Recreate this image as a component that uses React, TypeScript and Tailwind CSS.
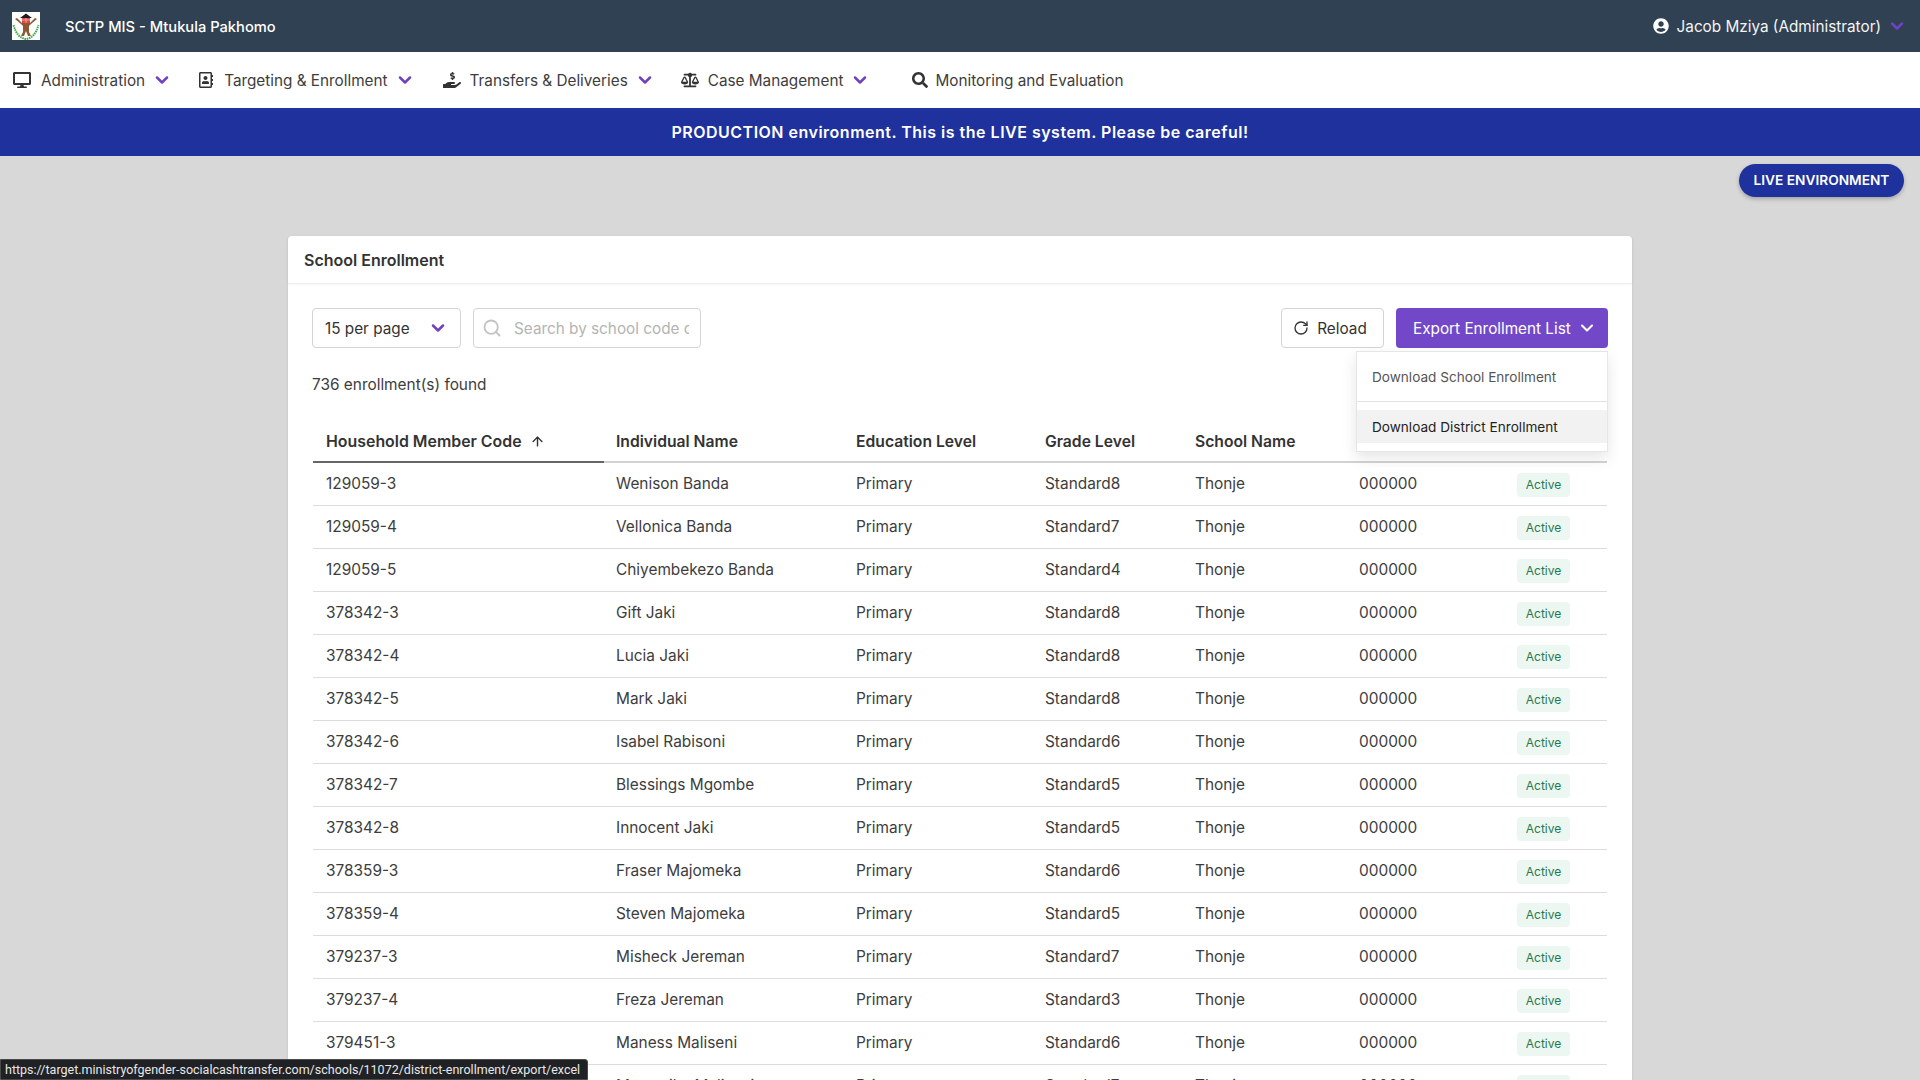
import { ChevronDown, ArrowUp, RotateCw, Search } from 'lucide-react';
import { FaDesktop, FaSearch, FaBalanceScale, FaHandHoldingUsd, FaRegAddressBook, FaUserCircle } from 'react-icons/fa';

const rows = [
  ['129059-3', 'Wenison Banda', 'Standard8'],
  ['129059-4', 'Vellonica Banda', 'Standard7'],
  ['129059-5', 'Chiyembekezo Banda', 'Standard4'],
  ['378342-3', 'Gift Jaki', 'Standard8'],
  ['378342-4', 'Lucia Jaki', 'Standard8'],
  ['378342-5', 'Mark Jaki', 'Standard8'],
  ['378342-6', 'Isabel Rabisoni', 'Standard6'],
  ['378342-7', 'Blessings Mgombe', 'Standard5'],
  ['378342-8', 'Innocent Jaki', 'Standard5'],
  ['378359-3', 'Fraser Majomeka', 'Standard6'],
  ['378359-4', 'Steven Majomeka', 'Standard5'],
  ['379237-3', 'Misheck Jereman', 'Standard7'],
  ['379237-4', 'Freza Jereman', 'Standard3'],
  ['379451-3', 'Maness Maliseni', 'Standard6'],
  ['379451-4', 'Mayamiko Maliseni', 'Standard7'],
];

const colWidths = 'grid grid-cols-[291px_240px_189px_150px_164px_158px_102px]';

const NavItem = ({ icon, label, chevron = true, className = '', textClass = 'ml-[9px]' }: { icon: React.ReactNode; label: string; chevron?: boolean; className?: string; textClass?: string }) => (
  <div className={`flex items-center text-[15.3px] text-[#3d3d3d] ${className}`}>
    <span className="flex w-[18px] justify-center text-[#333]">{icon}</span>
    <span className={`pt-[2px] ${textClass}`}>{label}</span>
    {chevron && <ChevronDown className="ml-[7px] h-[20px] w-[20px] text-[#6f42c1]" strokeWidth={3} />}
  </div>
);

// Logo: white tile, roof and red house held up by two figures, green name round the bottom
function Logo() {
  return (
    <svg viewBox="0 0 28 28" className="h-[28px] w-[28px] bg-white">
      <path d="M8 6 L14 1.5 L20 6 Z" fill="#1c1c1c" />
      <rect x="10" y="6" width="8" height="7" fill="#e2474b" />
      <path d="M10 8h8M14 6v7" stroke="#f5b5b5" strokeWidth="0.8" />
      <path d="M3 7 L9 12 L11 14 L11 20 L9 24 L12 24 L14 19 L16 24 L19 24 L17 20 L17 14 L19 12 L25 7 L23 6 L18 11 L10 11 L5 6 Z" fill="#8c5a32" />
      <path d="M1.5 13 Q5 26 14 27 Q23 26 26.5 13" fill="none" stroke="#3fae49" strokeWidth="2" strokeDasharray="1.6 0.7" />
    </svg>
  );
}

export default function App() {
  return (
    <div className="relative h-[1080px] overflow-hidden bg-[#d8d8d8] font-['Inter',sans-serif] text-[#333]">
      <header className="flex h-[52px] items-center bg-[#2f4152] pl-[12px] pr-[13px] text-white">
        <Logo />
        <span className="ml-[25px] pt-[2px] text-[14.7px] font-medium">SCTP MIS - Mtukula Pakhomo</span>
        <div className="ml-auto flex items-center">
          <FaUserCircle className="h-[16px] w-[16px]" />
          <span className="ml-[8px] pt-[2px] text-[15.3px] text-[#f4f4f4]">Jacob Mziya (Administrator)</span>
          <ChevronDown className="ml-[6px] h-[20px] w-[20px] text-[#6f42c1]" strokeWidth={3} />
        </div>
      </header>

      <nav className="flex h-[56px] items-center bg-white pl-[13px]">
        <NavItem textClass="ml-[10px]" icon={<FaDesktop className="h-[16px] w-[18px]" />} label="Administration" />
        <NavItem className="ml-[25px]" icon={<FaRegAddressBook className="h-[16px] w-[16px]" />} label="Targeting & Enrollment" />
        <NavItem className="ml-[28px]" icon={<FaHandHoldingUsd className="h-[18px] w-[18px]" />} label="Transfers & Deliveries" />
        <NavItem className="ml-[26px]" icon={<FaBalanceScale className="h-[16px] w-[20px]" />} label="Case Management" />
        <NavItem className="ml-[41px]" textClass="ml-[6px]" icon={<FaSearch className="h-[16px] w-[16px]" />} label="Monitoring and Evaluation" chevron={false} />
      </nav>

      <div className="flex h-[48px] items-center justify-center bg-[#1e319d] text-[16px] font-semibold tracking-[0.5px] text-white">
        PRODUCTION environment. This is the LIVE system. Please be careful!
      </div>

      <div className="flex justify-end pr-[16px] pt-[8px]">
        <div className="flex h-[33px] w-[165px] items-center justify-center rounded-full bg-[#1e319d] text-[13.7px] font-semibold text-white shadow-[0_2px_4px_rgba(0,0,0,0.25)]">
          LIVE ENVIRONMENT
        </div>
      </div>

      <main className="ml-[288px] mt-[39px] w-[1344px] rounded-[4px] bg-white shadow-[0_1px_3px_rgba(0,0,0,0.1)]">
        <div className="flex h-[48px] items-center border-b border-[#eeeeee] pl-[16px] text-[16px] font-semibold shadow-[0_1px_2px_rgba(0,0,0,0.04)]">
          School Enrollment
        </div>

        <div className="px-[24px] pt-[24px]">
          <div className="flex items-center">
            <div className="flex h-[40px] w-[149px] items-center justify-between rounded-[4px] border border-[#d4d4d4] pl-[12px] pr-[12px] text-[15.3px]">
              <span className="pt-[2px]">15 per page</span>
              <ChevronDown className="h-[20px] w-[20px] text-[#6f42c1]" strokeWidth={3} />
            </div>
            <div className="ml-[12px] flex h-[40px] w-[228px] items-center overflow-hidden rounded-[4px] border border-[#d4d4d4] pl-[8px] pr-[11px] text-[15.3px] text-[#b4b4b4]">
              <Search className="h-[20px] w-[20px] shrink-0 text-[#c4c4c4]" strokeWidth={2.25} />
              <span className="ml-[12px] overflow-hidden whitespace-nowrap pt-[2px]">Search by school code or name</span>
            </div>
            <div className="relative ml-auto flex items-center">
              <div className="flex h-[40px] w-[103px] items-center justify-center rounded-[4px] border border-[#d4d4d4] pr-[5px] text-[15.3px]">
                <RotateCw className="h-[16px] w-[16px]" strokeWidth={2} />
                <span className="ml-[8px] pt-[2px]">Reload</span>
              </div>
              <div className="ml-[12px] flex h-[40px] w-[212px] items-center rounded-[4px] bg-[#7248c8] pl-[17px] text-[15.3px] text-white">
                <span className="pt-[2px]">Export Enrollment List</span>
                <ChevronDown className="ml-[6px] h-[20px] w-[20px]" strokeWidth={2.5} />
              </div>
              <div className="absolute right-0 top-[43px] z-10 w-[252px] border border-[#e6e6e6] bg-white text-[13.6px] shadow-[0_6px_14px_rgba(0,0,0,0.1)]">
                <div className="flex h-[50px] items-center border-b border-[#e2e2e2] pl-[15px] pt-px text-[#555]">Download School Enrollment</div>
                <div className="mt-[8px] flex h-[33px] items-center bg-[#f2f2f2] pl-[15px] pt-px text-[#222]">Download District Enrollment</div>
                <div className="h-[8px]" />
              </div>
            </div>
          </div>

          <div className="mt-[25px] text-[15.4px] leading-[24px] text-[#3d3d3d]">736 enrollment(s) found</div>

          <div className="mt-[23px] ml-px w-[1294px]">
            <div className={`${colWidths} h-[43px] border-b-[2px] border-[#d2d2d2] pt-[2px] text-[15.7px] font-semibold leading-[24px]`}>
              <div className="-mb-[2px] flex items-center border-b-[2px] border-[#666] pl-[13px] text-[15.9px]">
                Household Member Code
                <ArrowUp className="ml-[8px] h-[15px] w-[15px]" strokeWidth={2.25} />
              </div>
              <div className="flex items-center pl-[12px]">Individual Name</div>
              <div className="flex items-center pl-[12px]">Education Level</div>
              <div className="flex items-center pl-[12px]">Grade Level</div>
              <div className="flex items-center pl-[12px]">School Name</div>
            </div>
            {rows.map(([code, name, grade]) => (
              <div key={code} className={`${colWidths} h-[43px] items-center border-b border-[#dcdcdc] text-[15.4px] text-[#3d3d3d]`}>
                <div className="pl-[13px]">{code}</div>
                <div className="pl-[12px]">{name}</div>
                <div className="pl-[12px]">Primary</div>
                <div className="pl-[12px]">{grade}</div>
                <div className="pl-[12px]">Thonje</div>
                <div className="pl-[12px]">000000</div>
                <div className="pl-[12px]">
                  <span className="mt-[2px] flex h-[24px] w-[53px] items-center justify-center rounded-[4px] bg-[#ecf7f2] text-[12px] text-[#1f7a50]">Active</span>
                </div>
              </div>
            ))}
          </div>
        </div>
      </main>

      <div className="absolute bottom-0 left-0 flex h-[21px] w-[588px] items-center rounded-tr-[3px] border border-[#4a4a4a] bg-[#202124] pl-[4px] pt-px font-['Roboto',sans-serif] text-[12.5px] text-[#e8e8e8]">
        https://target.ministryofgender-socialcashtransfer.com/schools/11072/district-enrollment/export/excel
      </div>
    </div>
  );
}
